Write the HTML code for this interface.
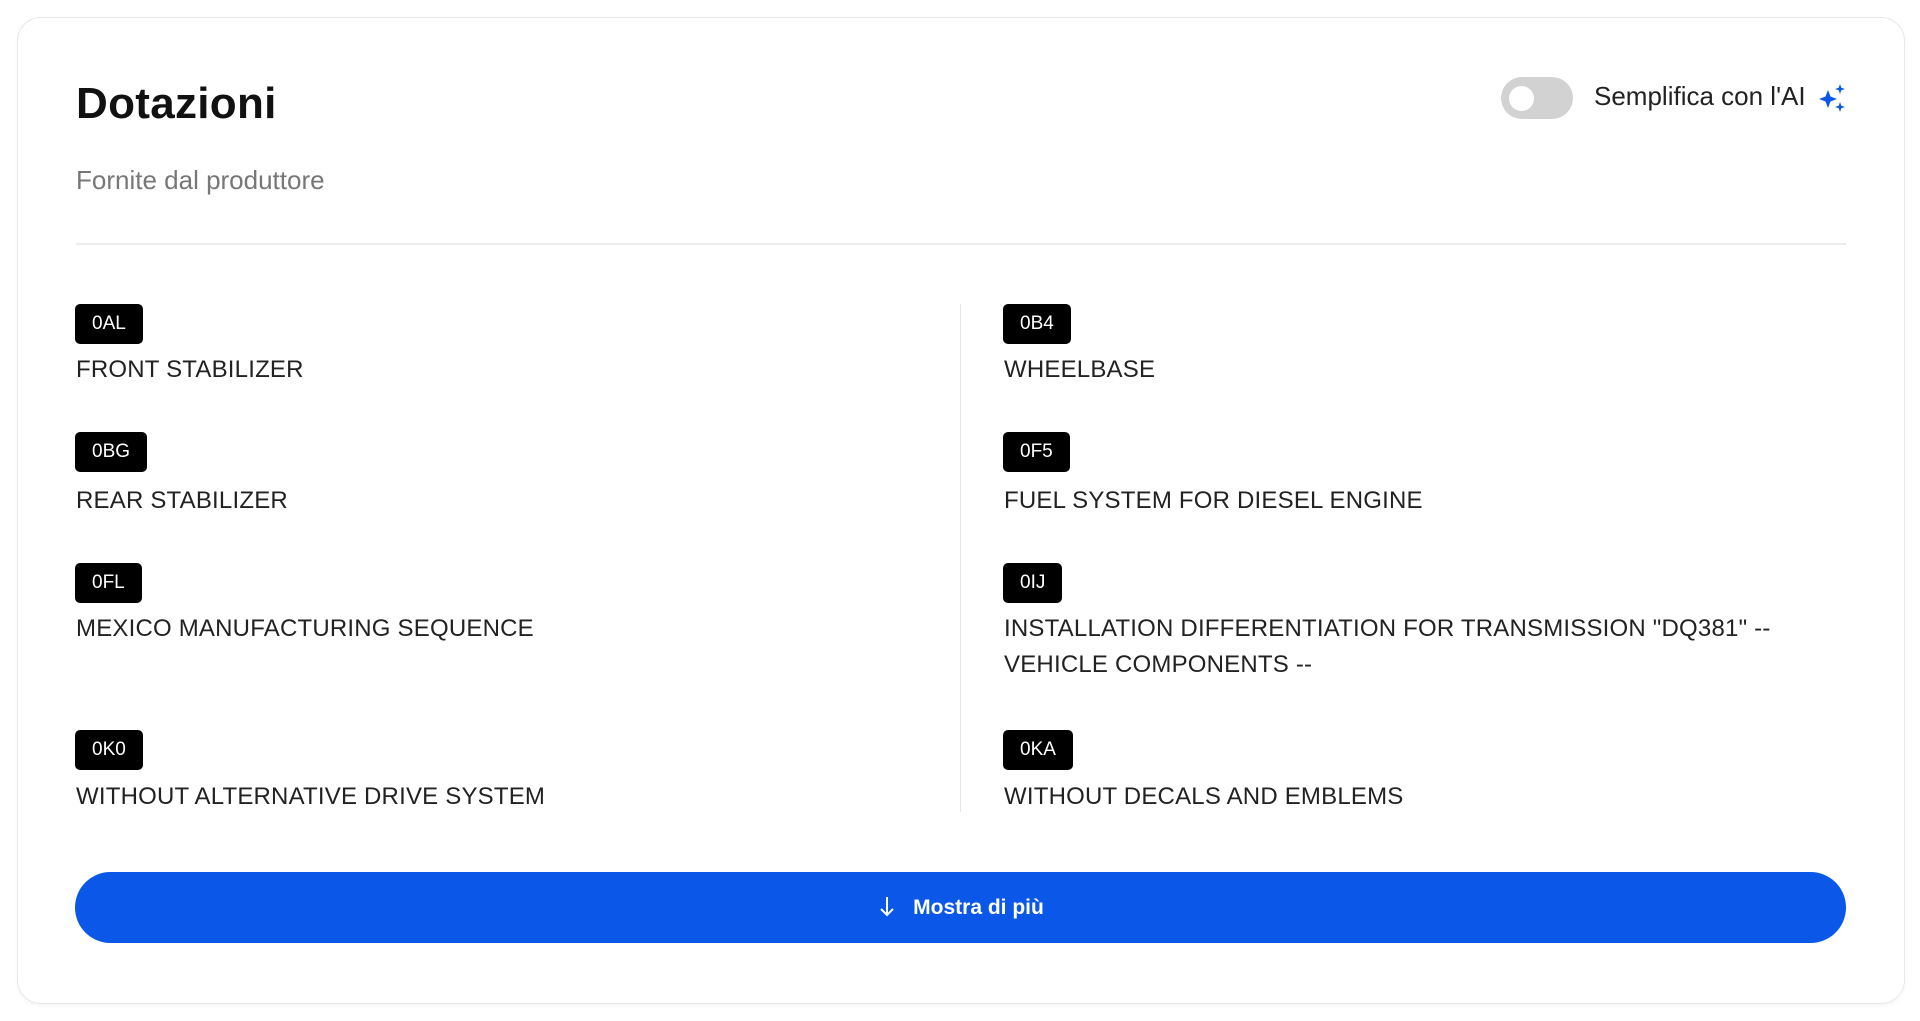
<!DOCTYPE html>
<html><head><meta charset="utf-8"><style>
*{margin:0;padding:0;box-sizing:border-box}
body{width:1920px;height:1021px;background:#fff;font-family:"Liberation Sans",sans-serif;position:relative;overflow:hidden}
.card{position:absolute;left:17px;top:17px;width:1888px;height:987px;border:1.5px solid #e8e8e8;border-radius:24px;box-shadow:0 2px 4px rgba(0,0,0,0.04)}
.abs{position:absolute}
h1{position:absolute;left:76px;top:79px;font-size:44px;font-weight:bold;color:#111;letter-spacing:0.3px}
.sub{left:76px;top:165px;font-size:26px;color:#777}
.hr{left:76px;top:243px;width:1770px;height:2px;background:#ececec}
.vr{left:960px;top:304px;width:1px;height:508px;background:#e6e6e6}
.badge{position:absolute;height:40px;background:#000;color:#fff;border-radius:5px;font-size:19px;line-height:40px;padding:0 17px}
.txt{position:absolute;font-size:24px;color:#222;line-height:36px;letter-spacing:0.2px}
.toggle{left:1501px;top:77px;width:72px;height:42px;border-radius:21px;background:#d2d2d2}
.knob{left:1509px;top:86px;width:25px;height:25px;border-radius:50%;background:#fff}
.btn{left:75px;top:872px;width:1771px;height:71px;border-radius:36px;background:#0b57e8;color:#fff;font-weight:bold;font-size:21px;line-height:71px;text-align:center}
</style></head><body>
<div class="card"></div>
<h1>Dotazioni</h1>
<div class="abs sub">Fornite dal produttore</div>
<div class="abs toggle"></div><div class="abs knob"></div>
<div class="abs" style="left:1594px;top:81px;font-size:26px;color:#222">Semplifica con l'AI</div>
<svg class="abs" style="left:1818px;top:82px" width="28" height="30" viewBox="0 0 28 30">
<path d="M10 8 L12.5 14.5 L19 17 L12.5 19.5 L10 26 L7.5 19.5 L1 17 L7.5 14.5Z" fill="#0b57e8"/>
<path d="M22 2 L23.3 5.7 L27 7 L23.3 8.3 L22 12 L20.7 8.3 L17 7 L20.7 5.7Z" fill="#0b57e8"/>
<path d="M22 20 L23.3 23.7 L27 25 L23.3 26.3 L22 30 L20.7 26.3 L17 25 L20.7 23.7Z" fill="#0b57e8"/>
</svg>
<div class="abs hr"></div>
<div class="abs vr"></div>

<div class="badge" style="left:75px;top:304px">0AL</div>
<div class="txt" style="left:76px;top:352px">FRONT STABILIZER</div>
<div class="badge" style="left:75px;top:432px">0BG</div>
<div class="txt" style="left:76px;top:483px">REAR STABILIZER</div>
<div class="badge" style="left:75px;top:563px">0FL</div>
<div class="txt" style="left:76px;top:611px">MEXICO MANUFACTURING SEQUENCE</div>
<div class="badge" style="left:75px;top:730px">0K0</div>
<div class="txt" style="left:76px;top:779px">WITHOUT ALTERNATIVE DRIVE SYSTEM</div>

<div class="badge" style="left:1003px;top:304px">0B4</div>
<div class="txt" style="left:1004px;top:352px">WHEELBASE</div>
<div class="badge" style="left:1003px;top:432px">0F5</div>
<div class="txt" style="left:1004px;top:483px">FUEL SYSTEM FOR DIESEL ENGINE</div>
<div class="badge" style="left:1003px;top:563px">0IJ</div>
<div class="txt" style="left:1004px;top:611px">INSTALLATION DIFFERENTIATION FOR TRANSMISSION "DQ381" --<br>VEHICLE COMPONENTS --</div>
<div class="badge" style="left:1003px;top:730px">0KA</div>
<div class="txt" style="left:1004px;top:779px">WITHOUT DECALS AND EMBLEMS</div>

<div class="abs btn"><svg width="20" height="24" viewBox="0 0 20 24" style="vertical-align:middle;margin-right:16px;margin-top:-4px"><path d="M10 3 V21 M4 15 L10 21 L16 15" stroke="#fff" stroke-width="2" fill="none"/></svg>Mostra di più</div>
</body></html>
